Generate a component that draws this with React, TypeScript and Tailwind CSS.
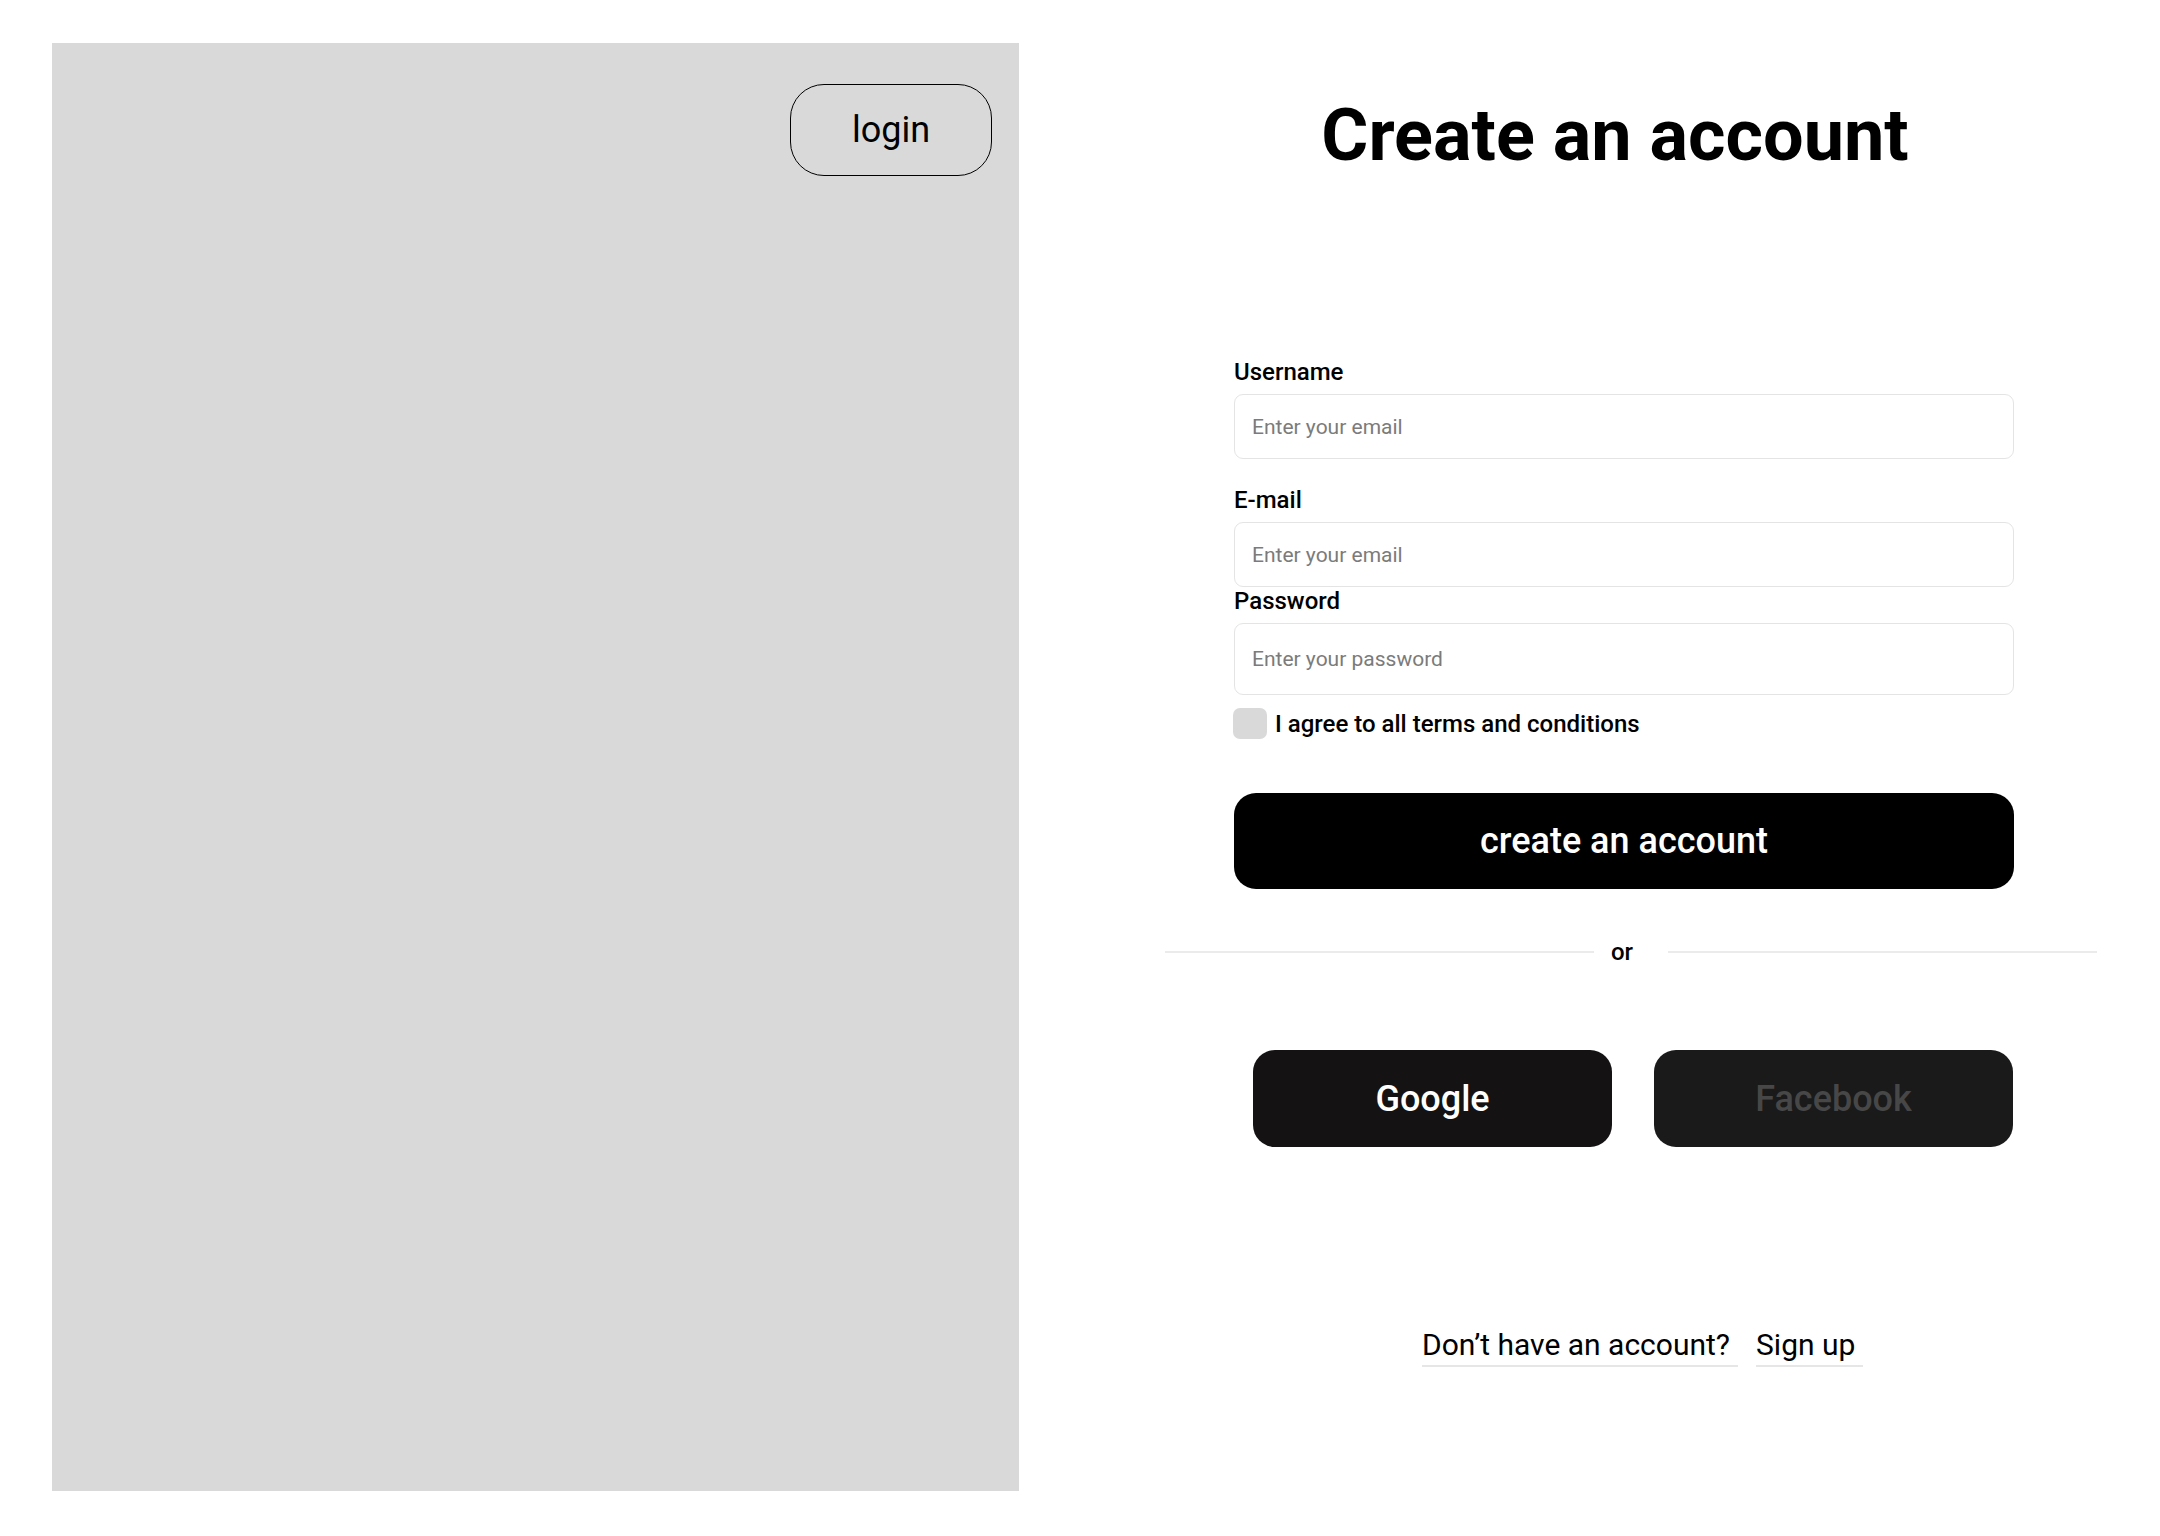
import React from 'react'

const font = { fontFamily: 'Roboto, "Noto Sans", sans-serif' }

function Field({ label, placeholder, height, className }: { label: string; placeholder: string; height: string; className?: string }) {
  return (
    <div className={className}>
      <label className="block text-[24px] leading-[28px] font-medium text-black">{label}</label>
      <input
        placeholder={placeholder}
        className={`mt-2 block w-[780px] ${height} rounded-[9px] border border-[#e4e4e4] bg-white px-[17px] text-[21px] text-black placeholder:text-[#7b7b7b] outline-none`}
      />
    </div>
  )
}

export default function App() {
  return (
    <div className="flex w-[2160px] h-[1536px] bg-white" style={font}>
      {/* left image placeholder */}
      <div className="ml-[52px] mt-[43px] w-[967px] h-[1448px] bg-[#d9d9d9] flex justify-end items-start pt-[41px] pr-[27px]">
        <button className="w-[202px] h-[92px] rounded-[34px] border-[1.5px] border-black text-[36px] leading-none text-black">
          login
        </button>
      </div>

      {/* right form */}
      <div className="flex flex-col pt-[100px]">
        <h1 className="ml-[215px] w-[762px] text-center text-[72px] leading-[72px] font-bold text-black">
          Create an account
        </h1>

        <div className="ml-[215px] mt-[186px] w-[780px] flex flex-col">
          <Field label="Username" placeholder="Enter your email" height="h-[65px]" />
          <Field label="E-mail" placeholder="Enter your email" height="h-[65px]" className="mt-[27px]" />
          <Field label="Password" placeholder="Enter your password" height="h-[72px]" className="mt-0" />

          <label className="mt-[13px] flex items-center gap-[8px]">
            <span className="w-[34px] h-[31px] rounded-[7px] bg-[#d9d9d9] -ml-[1px]" />
            <span className="text-[24px] leading-[28px] font-medium text-black">I agree to all terms and conditions</span>
          </label>

          <button className="mt-[54px] w-[780px] h-[96px] rounded-[22px] bg-black text-white text-[36px] font-medium">
            create an account
          </button>

          <div className="mt-[49px] -ml-[69px] w-[932px] flex items-center h-[28px]">
            <div className="flex-1 h-[2px] bg-[#ebebeb]" />
            <span className="ml-[17px] mr-[35px] text-[24px] font-medium leading-[28px] text-black">or</span>
            <div className="flex-1 h-[2px] bg-[#ebebeb]" />
          </div>

          <div className="mt-[84px] pl-[19px] flex gap-[42px]">
            <button className="w-[359px] h-[97px] rounded-[22px] bg-[#141213] text-white text-[36px] font-medium">
              Google
            </button>
            <button className="w-[359px] h-[97px] rounded-[22px] bg-[#1a1a1a] text-[#474747] text-[36px] font-medium">
              Facebook
            </button>
          </div>

          <div className="mt-[180px] ml-[188px] flex gap-[18px] text-[30px] leading-[36px] text-black">
            <span className="pb-[2px] pr-[8px] border-b-2 border-[#e6e6e6]">Don’t have an account?</span>
            <span className="pb-[2px] pr-[8px] border-b-2 border-[#e6e6e6]">Sign up</span>
          </div>
        </div>
      </div>
    </div>
  )
}
